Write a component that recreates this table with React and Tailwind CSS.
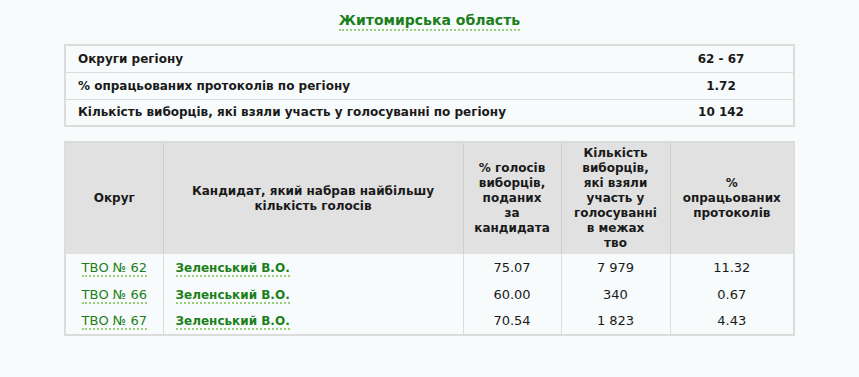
import React from "react";

const font = { fontFamily: '"DejaVu Sans", Verdana, sans-serif' };

const rows = [
  { tvo: "ТВО № 62", name: "Зеленський В.О.", pct: "75.07", cnt: "7 979", proc: "11.32" },
  { tvo: "ТВО № 66", name: "Зеленський В.О.", pct: "60.00", cnt: "340", proc: "0.67" },
  { tvo: "ТВО № 67", name: "Зеленський В.О.", pct: "70.54", cnt: "1 823", proc: "4.43" },
];

export default function App() {
  return (
    <div className="w-[859px] h-[377px] bg-[#f8fbfc] text-[#1a1a1a]" style={font}>
      <div className="pt-[11px] flex justify-center">
        <span className="text-[14px] leading-[18px] font-bold text-[#1b7f1b] border-b-2 border-dotted border-[#9acd7a]">
          Житомирська область
        </span>
      </div>
      <table className="mx-auto mt-[13px] w-[731px] border-collapse border-2 border-[#dcdcdc] text-[12px] font-bold">
        <tbody>
          {[
            ["Округи регіону", "62 - 67"],
            ["% опрацьованих протоколів по регіону", "1.72"],
            ["Кількість виборців, які взяли участь у голосуванні по регіону", "10 142"],
          ].map(([a, b], i) => (
            <tr key={i} className="h-[27px] border-b border-[#dcdcdc]">
              <td className="pl-[12px] leading-[16px]">{a}</td>
              <td className="w-[145px] text-center leading-[16px]">{b}</td>
            </tr>
          ))}
        </tbody>
      </table>
      <table className="mx-auto mt-[14px] w-[731px] border-collapse border-2 border-[#dcdcdc] text-[13px]">
        <thead>
          <tr className="bg-[#e1e1e1] font-bold text-[12px] h-[112px] leading-[15px]">
            <th className="w-[98px] border-r border-[#cfcfcf] px-[6px]">Округ</th>
            <th className="w-[300px] border-r border-[#cfcfcf] px-[20px]">
              Кандидат, який набрав найбільшу кількість голосів
            </th>
            <th className="w-[98px] border-r border-[#cfcfcf] px-[10px]">
              % голосів виборців, поданих за кандидата
            </th>
            <th className="w-[109px] border-r border-[#cfcfcf] px-[12px]">
              Кількість виборців, які взяли участь у голосуванні в межах тво
            </th>
            <th className="px-[6px]">% опрацьованих протоколів</th>
          </tr>
        </thead>
        <tbody>
          {rows.map((r, i) => (
            <tr key={i} className="h-[27px]">
              <td className="border-r border-[#dcdcdc] text-center">
                <span className="text-[#1b7f1b] border-b-2 border-dotted border-[#9acd7a] leading-[15px]">
                  {r.tvo}
                </span>
              </td>
              <td className="border-r border-[#dcdcdc] pl-[12px]">
                <span className="text-[12px] font-bold text-[#1b7f1b] border-b-2 border-dotted border-[#9acd7a] leading-[15px]">
                  {r.name}
                </span>
              </td>
              <td className="border-r border-[#dcdcdc] text-center">{r.pct}</td>
              <td className="border-r border-[#dcdcdc] text-center">{r.cnt}</td>
              <td className="text-center">{r.proc}</td>
            </tr>
          ))}
        </tbody>
      </table>
    </div>
  );
}
